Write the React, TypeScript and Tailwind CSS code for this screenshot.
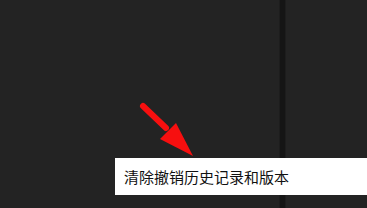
export default function App() {
  return (
    <div className="relative w-[367px] h-[208px] overflow-hidden bg-[#232323]">
      <div className="flex h-full">
        <div className="w-[279px] h-full bg-[#232323]" />
        <div className="w-[7px] h-full flex">
          <div className="w-[1px] bg-[#1d1d1d]" />
          <div className="w-[5px] bg-[#151515]" />
          <div className="w-[1px] bg-[#1d1d1d]" />
        </div>
        <div className="flex-1 h-full bg-[#232323]" />
      </div>

      <svg
        className="absolute left-0 top-0"
        width="367"
        height="208"
        viewBox="0 0 367 208"
      >
        <line
          x1="143"
          y1="106"
          x2="166"
          y2="128"
          stroke="#f70f0f"
          strokeWidth="6"
          strokeLinecap="round"
        />
        <polygon points="160,139 176,123 193,156" fill="#f70f0f" />
      </svg>

      <div className="absolute left-[115px] top-[158px] w-[252px] h-[37px] bg-white flex items-center pl-[9px]">
        <span className="text-[15px] text-[#111] font-['Microsoft_YaHei','Noto_Sans_CJK_SC',sans-serif] leading-none">
          清除撤销历史记录和版本
        </span>
      </div>
    </div>
  );
}
